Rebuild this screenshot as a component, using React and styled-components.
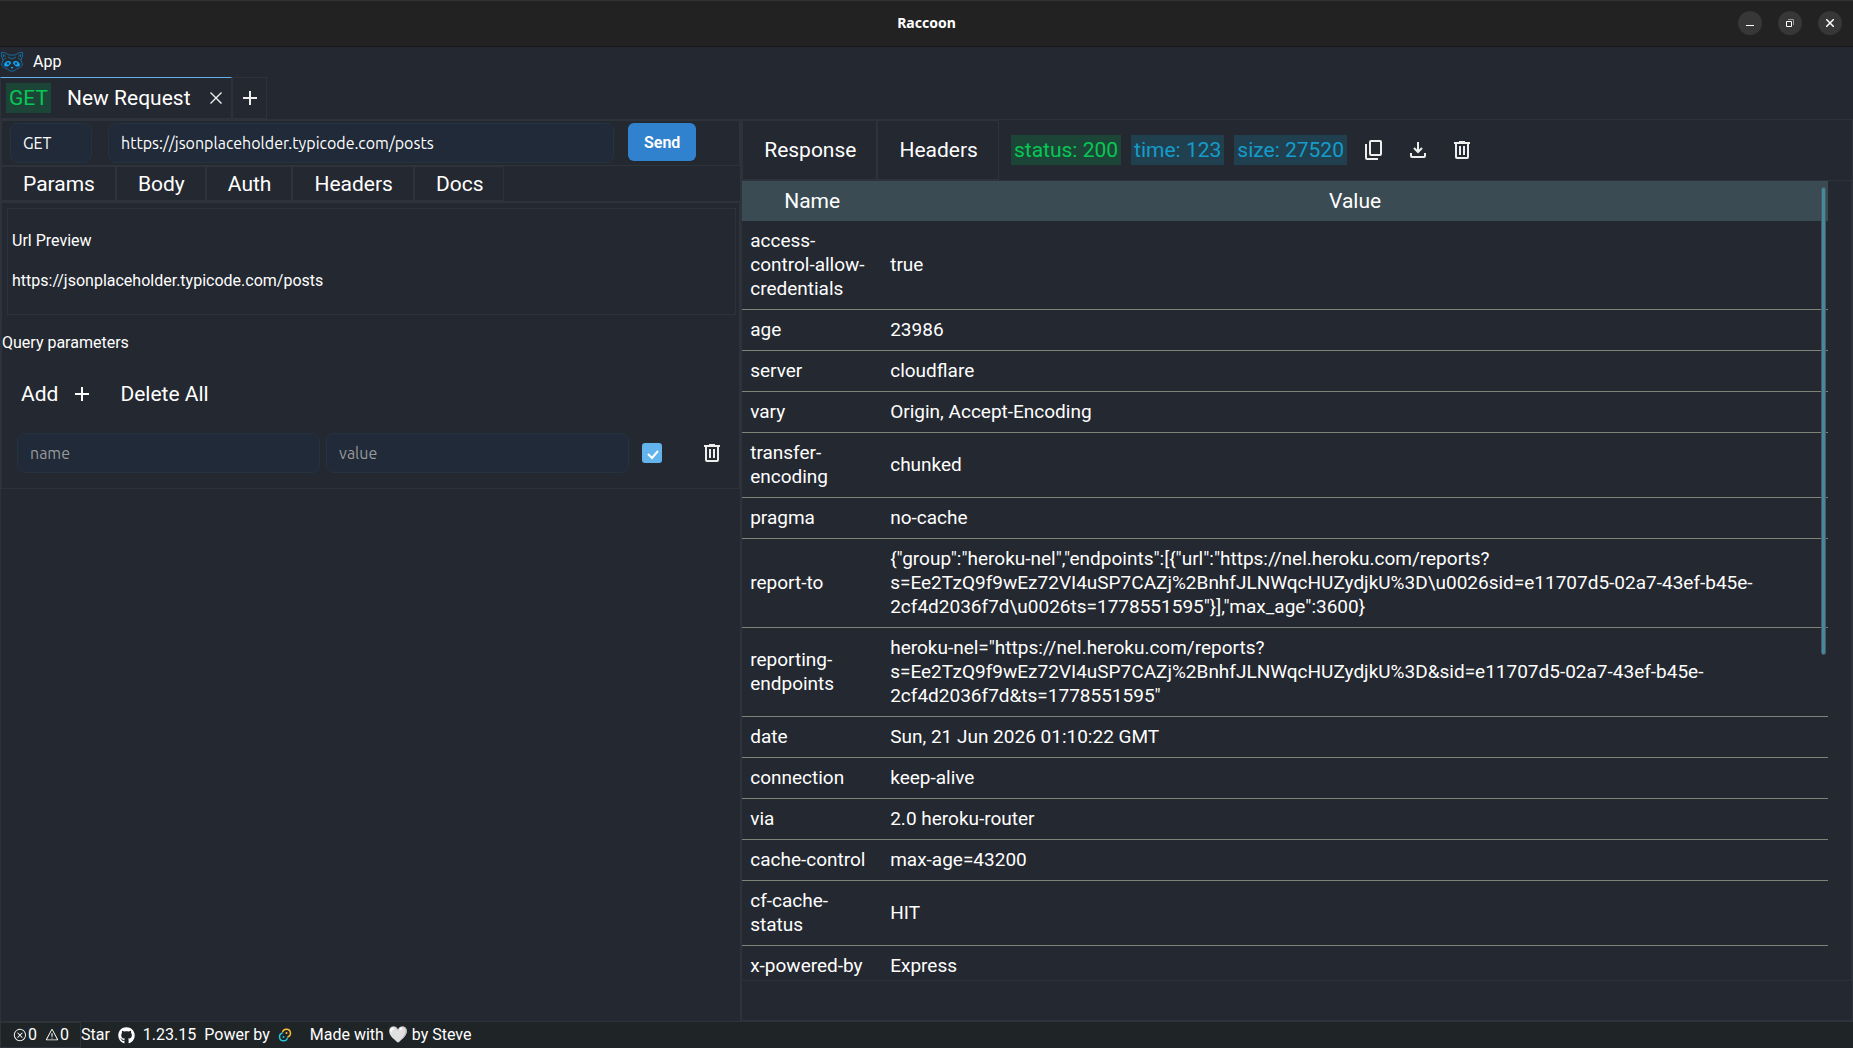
import React from "react";
import styled, { createGlobalStyle } from "styled-components";
import { VscClose, VscError, VscWarning } from "react-icons/vsc";
import { MdAdd } from "react-icons/md";
import { FaGithub } from "react-icons/fa";

const line = "#2e323b";

const GlobalStyle = createGlobalStyle`
  * {
    box-sizing: border-box;
  }

  html,
  body,
  #root {
    height: 100%;
  }

  body {
    margin: 0;
    overflow: hidden;
    background: #242830;
    color: #fff;
    font-family: Roboto, "Liberation Sans", sans-serif;
    font-size: 16px;
    line-height: 24px;
  }

  button,
  input,
  select {
    font-family: inherit;
    color: inherit;
  }
`;

const Window = styled.div`
  height: 100%;
  display: flex;
  flex-direction: column;
`;

// ---------- title bar ----------

const TitleBar = styled.header`
  flex: none;
  height: 47px;
  display: grid;
  grid-template-columns: 1fr auto 1fr;
  align-items: center;
  padding: 0 11px 2px;
  background: #222;
  border-top: 1px solid #333;
  border-bottom: 1px solid #181818;
`;

const Title = styled.h1`
  grid-column: 2;
  margin: 0;
  font-family: "Noto Sans", sans-serif;
  font-size: 14px;
  font-weight: 700;
  line-height: 20px;
`;

const WindowButtons = styled.div`
  display: flex;
  justify-content: flex-end;
  gap: 16px;
`;

const WindowButton = styled.button`
  width: 24px;
  height: 24px;
  padding: 0;
  display: grid;
  place-items: center;
  border: 0;
  border-radius: 50%;
  background: #373737;
`;

// ---------- menu and tabs ----------

const MenuBar = styled.nav`
  flex: none;
  height: 30px;
  display: flex;
  align-items: center;
  gap: 9px;
`;

const MenuButton = styled.button`
  padding: 0;
  border: 0;
  background: none;
  font-size: 16px;
  line-height: 24px;
`;

const TabBar = styled.div`
  flex: none;
  height: 42px;
  display: flex;
`;

const RequestTab = styled.div`
  width: 232px;
  display: flex;
  align-items: center;
  padding: 0 4px 0 5px;
  border: 1px solid ${line};
  border-top-color: #63b3ed;
`;

const Badge = styled.span`
  padding: 0 3px;
  font-size: 21px;
  line-height: 30px;
  white-space: nowrap;
  color: ${(p) => (p.$tone === "green" ? "#06c755" : "#149ccb")};
  background: ${(p) => (p.$tone === "green" ? "#1d4537" : "#21404f")};
`;

const TabName = styled.span`
  flex: 1;
  padding-left: 16px;
  font-size: 21px;
`;

const IconButton = styled.button`
  width: ${(p) => p.$width || 20}px;
  padding: 0;
  display: grid;
  place-items: center;
  border: 0;
  background: none;
  color: #eee;
`;

const AddTab = styled(IconButton)`
  width: 35px;
  border: 1px solid ${line};
`;

// ---------- panels ----------

const Panels = styled.main`
  flex: 1;
  min-height: 0;
  display: grid;
  grid-template-columns: 2fr 3fr;
  border-top: 1px solid ${line};
`;

const RequestPanel = styled.section`
  border: 1px solid ${line};
  border-width: 0 1px;
`;

const UrlRow = styled.form`
  height: 46px;
  display: flex;
  align-items: flex-start;
  padding: 2px 43px 0 8px;
  border: 1px solid ${line};
`;

const MethodSelect = styled.select`
  width: 82px;
  height: 40px;
  margin-right: 16px;
  padding: 0 12px;
  appearance: none;
  border: 1px solid #273240;
  border-radius: 8px;
  background: #202a38;
  font-family: Ubuntu, Lato, sans-serif;
  font-size: 16px;
`;

const TextInput = styled.input`
  flex: 1;
  min-width: 0;
  height: 40px;
  padding: 0 12px;
  border: 1px solid #273240;
  border-radius: 8px;
  background: #202a38;
  font-family: Ubuntu, Lato, sans-serif;
  font-size: 16px;

  &::placeholder {
    color: #999;
    opacity: 1;
  }
`;

const SendButton = styled.button`
  width: 68px;
  height: 38px;
  margin-left: 14px;
  border: 0;
  border-radius: 6px;
  background: #3182ce;
  font-size: 16px;
  font-weight: 600;
`;

const SectionTabs = styled.div`
  height: ${(p) => p.$height}px;
  display: flex;
  align-items: stretch;
  border-bottom: 1px solid ${line};
`;

const SectionTab = styled.button`
  padding: 0 20px 0 21px;
  border: 1px solid ${line};
  background: none;
  font-size: 21px;
`;

const PreviewBox = styled.div`
  height: 107px;
  margin: 5px 3px 0 5px;
  padding: 20px 4px 0;
  border: 1px solid ${line};
`;

const Paragraph = styled.p`
  margin: 0 0 16px;
`;

const ParamsBody = styled.div`
  border: 1px solid ${line};
`;

const QueryTitle = styled.p`
  margin: 16px 0;
`;

const Actions = styled.div`
  display: flex;
  gap: 26px;
  padding: 7px 19px 11px;
`;

const ActionButton = styled.button`
  display: flex;
  align-items: center;
  gap: 12px;
  padding: 0;
  border: 0;
  background: none;
  font-size: 21px;
  line-height: 32px;
`;

const ParamRow = styled.div`
  display: flex;
  align-items: center;
  gap: 6px;
  padding: 12px 17px 15px 15px;
`;

const Checkbox = styled.input`
  width: 20px;
  height: 20px;
  margin: 0 34px 0 7px;
  appearance: none;
  border-radius: 3px;
  background: #63b3ed
    url("data:image/svg+xml,%3Csvg xmlns='http://www.w3.org/2000/svg' viewBox='0 0 20 20'%3E%3Cpath d='M6 11l4 4 6-7' fill='none' stroke='white' stroke-width='2'/%3E%3C/svg%3E");
`;

const ResponsePanel = styled.section`
  min-width: 0;
  min-height: 0;
  display: flex;
  flex-direction: column;
  border: 1px solid ${line};
  border-top: 0;
  padding-bottom: 39px;
`;

const Stats = styled.div`
  display: flex;
  align-items: center;
  gap: 10px;
  padding-left: 12px;
`;

const TableArea = styled.div`
  flex: 1;
  min-height: 0;
  position: relative;
  overflow: hidden;
  padding-right: 23px;
  border-right: 1px solid ${line};
  border-bottom: 1px solid ${line};
`;

const ScrollThumb = styled.div`
  position: absolute;
  top: 6px;
  right: 25px;
  width: 5px;
  height: 468px;
  border: 1px solid #505860;
  border-radius: 3px;
  background: #4389a0;
`;

const HeaderTable = styled.table`
  width: 100%;
  table-layout: fixed;
  border-collapse: collapse;
  font-size: 19px;
  line-height: 24px;

  th {
    height: 40px;
    padding: 0;
    background: #3a4b54;
    font-size: 21px;
    font-weight: 400;
  }

  th:first-child {
    width: 140px;
  }

  td {
    padding: 8px;
    border-bottom: 1px solid #7c8578;
    overflow-wrap: break-word;
  }
`;

// ---------- status bar ----------

const StatusBar = styled.footer`
  flex: none;
  height: 27px;
  display: flex;
  align-items: center;
  background: #1f2426;
  border-top: 1px solid ${line};
`;

const Problems = styled.div`
  width: 81px;
  height: 26px;
  display: flex;
  align-items: center;
  padding-left: 12px;
  border: 1px solid ${line};

  span {
    margin: 0 8px 0 1px;
  }
`;

const StatusItem = styled.span`
  display: flex;
  align-items: center;
  gap: 8px;
  margin-right: ${(p) => p.$space || 8}px;
`;

const headers = [
  ["access-control-allow-credentials", "true"],
  ["age", "23986"],
  ["server", "cloudflare"],
  ["vary", "Origin, Accept-Encoding"],
  ["transfer-encoding", "chunked"],
  ["pragma", "no-cache"],
  [
    "report-to",
    '{"group":"heroku-nel","endpoints":[{"url":"https://nel.heroku.com/reports?s=Ee2TzQ9f9wEz72VI4uSP7CAZj%2BnhfJLNWqcHUZydjkU%3D\\u0026sid=e11707d5-02a7-43ef-b45e-2cf4d2036f7d\\u0026ts=1778551595"}],"max_age":3600}',
  ],
  [
    "reporting-endpoints",
    'heroku-nel="https://nel.heroku.com/reports?s=Ee2TzQ9f9wEz72VI4uSP7CAZj%2BnhfJLNWqcHUZydjkU%3D&sid=e11707d5-02a7-43ef-b45e-2cf4d2036f7d&ts=1778551595"',
  ],
  ["date", "Sun, 21 Jun 2026 01:10:22 GMT"],
  ["connection", "keep-alive"],
  ["via", "2.0 heroku-router"],
  ["cache-control", "max-age=43200"],
  ["cf-cache-status", "HIT"],
  ["x-powered-by", "Express"],
];

const RaccoonLogo = () => (
  <svg width="24" height="22" viewBox="0 0 24 22" fill="none" stroke="#17699b">
    <path d="M3 9L1.500 5V1.500h3L9 4h6l4.500-2.500h3V5L21 9l1.500 5-3 3-3 1-2.500 2h-4l-2.500-2-3-1-3-3z" />
    <path d="M3.500 6V3.500L6 5.500M20.500 6V3.500L18 5.500M8 6l4 2 4-2M3 9l3-2M21 9l-3-2" />
    <path d="M4 14c0-2 2-4 4.500-4 2 0 2.500 1 2.500 2.500L8 15.500H5zM20 14c0-2-2-4-4.500-4-2 0-2.500 1-2.500 2.500l3 3h3z" fill="#0ea5f5" stroke="none" />
    <circle cx="8" cy="12.500" r="1.200" fill="#153e5c" stroke="none" />
    <circle cx="16" cy="12.500" r="1.200" fill="#153e5c" stroke="none" />
    <path d="M10.500 16h3L12 18z" fill="#0ea5f5" stroke="none" />
  </svg>
);

const TrashIcon = () => (
  <svg width="16" height="18" viewBox="0 0 16 18" fill="none" stroke="currentColor" strokeWidth="2">
    <path d="M0 2h16M5 1h6M2 2v14q0 1 1 1h10q1 0 1-1V2" />
    <path d="M6 5v9M10 5v9" />
  </svg>
);

const CopyIcon = () => (
  <svg width="18" height="20" viewBox="0 0 18 20" fill="none" stroke="currentColor" strokeWidth="2">
    <rect x="5" y="1" width="11" height="14" rx="1" />
    <path d="M1 4v14q0 1 1 1h11" />
  </svg>
);

const DownloadIcon = () => (
  <svg width="16" height="16" viewBox="0 0 16 16" fill="none" stroke="currentColor" strokeWidth="2">
    <path d="M1 11v3q0 1 1 1h12q1 0 1-1v-3M8 0v10M4 6l4 4 4-4" />
  </svg>
);

const TauriIcon = () => (
  <svg width="14" height="14" viewBox="0 0 14 14" fill="none" strokeWidth="1.500">
    <path d="M4.500 4.500a4 4 0 1 1 5 4.500" stroke="#ffc131" />
    <path d="M9.500 9.500a4 4 0 1 1-5-4.500" stroke="#24c8db" />
    <circle cx="8.500" cy="5" r="1" fill="#ffc131" />
    <circle cx="5.500" cy="9" r="1" fill="#24c8db" />
  </svg>
);

export default function App() {
  return (
    <>
      <GlobalStyle />
      <Window>
        <TitleBar>
          <Title>Raccoon</Title>
          <WindowButtons>
            <WindowButton aria-label="Minimize">
              <svg width="8" height="8" stroke="#fff"><path d="M0 6.500h8" /></svg>
            </WindowButton>
            <WindowButton aria-label="Restore">
              <svg width="8" height="8" fill="none" stroke="#fff">
                <path d="M.5 2.500h5v5h-5z" />
                <path d="M2 .5h5.500v5.500" stroke="#999" />
              </svg>
            </WindowButton>
            <WindowButton aria-label="Close">
              <svg width="8" height="8" stroke="#fff" strokeWidth="1.500"><path d="M0 0l8 8M8 0L0 8" /></svg>
            </WindowButton>
          </WindowButtons>
        </TitleBar>

        <MenuBar>
          <RaccoonLogo />
          <MenuButton>App</MenuButton>
        </MenuBar>

        <TabBar>
          <RequestTab>
            <Badge $tone="green">GET</Badge>
            <TabName>New Request</TabName>
            <IconButton $width={22} aria-label="Close tab"><VscClose size={22} /></IconButton>
          </RequestTab>
          <AddTab aria-label="New tab"><MdAdd size={24} /></AddTab>
        </TabBar>

        <Panels>
          <RequestPanel>
            <UrlRow>
              <MethodSelect aria-label="Method" defaultValue="GET">
                <option>GET</option>
              </MethodSelect>
              <TextInput aria-label="Url" defaultValue="https://jsonplaceholder.typicode.com/posts" />
              <SendButton type="button">Send</SendButton>
            </UrlRow>
            <SectionTabs $height={36}>
              {["Params", "Body", "Auth", "Headers", "Docs"].map((name) => (
                <SectionTab key={name}>{name}</SectionTab>
              ))}
            </SectionTabs>
            <ParamsBody>
              <PreviewBox>
                <Paragraph>Url Preview</Paragraph>
                <Paragraph>https://jsonplaceholder.typicode.com/posts</Paragraph>
              </PreviewBox>
              <QueryTitle>Query parameters</QueryTitle>
              <Actions>
                <ActionButton>Add <MdAdd size={24} /></ActionButton>
                <ActionButton>Delete All</ActionButton>
              </Actions>
              <ParamRow>
                <TextInput aria-label="Parameter name" placeholder="name" />
                <TextInput aria-label="Parameter value" placeholder="value" />
                <Checkbox type="checkbox" aria-label="Enabled" defaultChecked />
                <IconButton aria-label="Delete parameter"><TrashIcon /></IconButton>
              </ParamRow>
            </ParamsBody>
          </RequestPanel>

          <ResponsePanel>
            <SectionTabs $height={61}>
              <SectionTab>Response</SectionTab>
              <SectionTab>Headers</SectionTab>
              <Stats>
                <Badge $tone="green">status: 200</Badge>
                <Badge>time: 123</Badge>
                <Badge>size: 27520</Badge>
                <IconButton $width={34} aria-label="Copy"><CopyIcon /></IconButton>
                <IconButton $width={34} aria-label="Download"><DownloadIcon /></IconButton>
                <IconButton $width={34} aria-label="Clear"><TrashIcon /></IconButton>
              </Stats>
            </SectionTabs>
            <TableArea>
              <HeaderTable>
                <thead>
                  <tr>
                    <th>Name</th>
                    <th>Value</th>
                  </tr>
                </thead>
                <tbody>
                  {headers.map(([name, value]) => (
                    <tr key={name}>
                      <td>{name}</td>
                      <td>{value}</td>
                    </tr>
                  ))}
                </tbody>
              </HeaderTable>
              <ScrollThumb />
            </TableArea>
          </ResponsePanel>
        </Panels>

        <StatusBar>
          <Problems>
            <VscError size={14} />
            <span>0</span>
            <VscWarning size={14} />
            <span>0</span>
          </Problems>
          <StatusItem>Star <FaGithub size={17} /></StatusItem>
          <StatusItem>1.23.15</StatusItem>
          <StatusItem $space={18}>Power by <TauriIcon /></StatusItem>
          <StatusItem>Made with 🤍 by Steve</StatusItem>
        </StatusBar>
      </Window>
    </>
  );
}
